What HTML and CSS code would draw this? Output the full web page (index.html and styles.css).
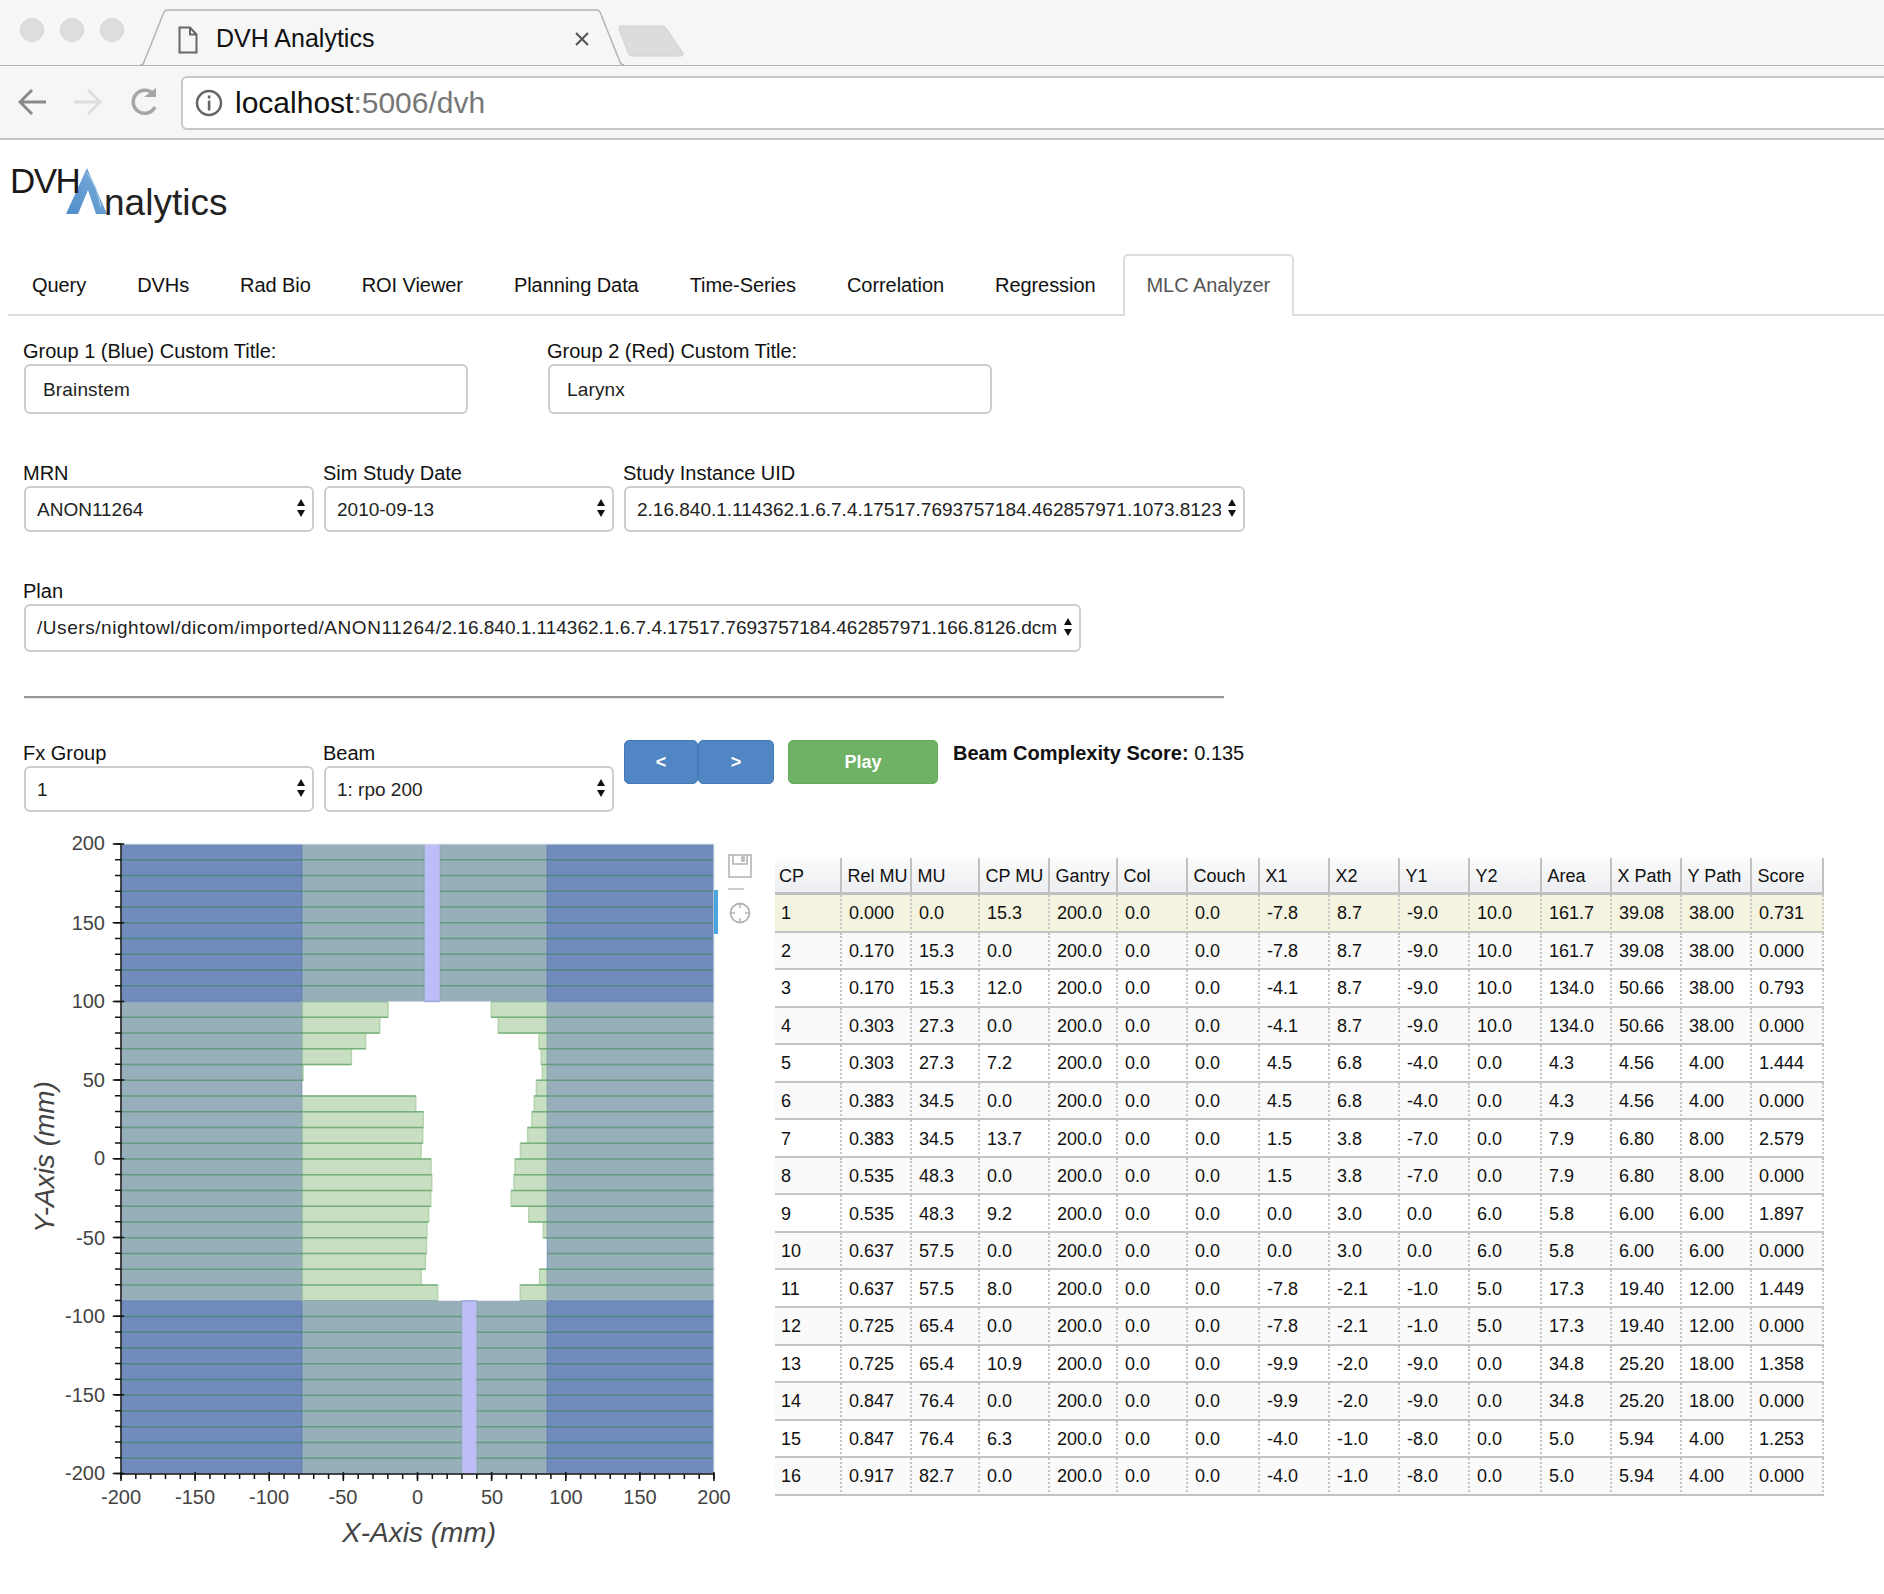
FILE: index.html
```html
<!DOCTYPE html>
<html lang="en">
<head>
<meta charset="utf-8">
<title>DVH Analytics</title>
<link rel="stylesheet" href="styles.css">
</head>
<body>
<header class="browser">
  <div class="tabstrip">
    <div class="lights"><span class="light"></span><span class="light"></span><span class="light"></span></div>
    <div class="tab">
      <svg class="tab-shape" width="484" height="57" viewBox="0 0 484 57"><path d="M0 56H1Q3 56 4 53L24 3Q25 1 28 1H456Q459 1 460 3L480 53Q481 56 484 56" fill="#f6f6f6" stroke="#b4b4b4" stroke-width="1.5"/></svg>
      <svg class="tab-file" width="20" height="28" viewBox="0 0 20 28"><path d="M1.5 1.5H12L18.500 8.500V26.500H1.500Z M12 1.500V8.500H18.500" fill="none" stroke="#666" stroke-width="2"/></svg>
      <span class="tab-title">DVH Analytics</span>
      <svg class="tab-close" width="14" height="14" viewBox="0 0 14 14"><path d="M1 1L13 13M13 1L1 13" stroke="#555" stroke-width="2"/></svg>
    </div>
    <svg class="newtab" width="66" height="32" viewBox="0 0 66 32"><path d="M3 1H45Q47 1 48 3L65 28Q66 31 63 31H14Q11 31 10 28L1 4Q0 1 3 1Z" fill="#dcdcdc" stroke="#d2d2d2"/></svg>
  </div>
  <div class="toolbar">
    <svg class="nav-icons" width="150" height="30" viewBox="0 0 150 30">
      <path d="M2 14H28M14 2L2 14L14 26" fill="none" stroke="#8a8a8a" stroke-width="3"/>
      <path d="M56 14H82M70 2L82 14L70 26" fill="none" stroke="#dedede" stroke-width="3"/>
      <path d="M136 7A11.500 11.500 0 1 0 137 19" fill="none" stroke="#a6a6a6" stroke-width="3.500"/>
      <path d="M126 9H138V0Z" fill="#a6a6a6"/>
    </svg>
    <div class="address">
      <svg width="28" height="28" viewBox="0 0 28 28"><circle cx="14" cy="14" r="12" fill="none" stroke="#666" stroke-width="2.500"/><rect x="12.800" y="6.500" width="2.600" height="3" fill="#666"/><rect x="12.800" y="11.500" width="2.600" height="10" fill="#666"/></svg>
      <span class="url">localhost<span class="url-dim">:5006/dvh</span></span>
    </div>
  </div>
</header>

<main class="app">
  <div class="logo">
    <svg class="logo-a" width="44" height="48" viewBox="0 0 44 48">
      <defs><linearGradient id="logoGrad" x1="0" y1="1" x2="1" y2="0"><stop offset="0" stop-color="#4f8cc9"/><stop offset="1" stop-color="#7eb0dd"/></linearGradient></defs>
      <path d="M1 47L22 1L42 47H31L23 23L13 47Z" fill="url(#logoGrad)"/>
      <path d="M22 6Q32 18 36 40" fill="none" stroke="#b6d3ec" stroke-width="1"/>
    </svg>
    <span class="logo-dvh">DVH</span>
    <span class="logo-rest">nalytics</span>
  </div>

  <nav class="tabs">
    <a class="tab-link">Query</a>
    <a class="tab-link">DVHs</a>
    <a class="tab-link">Rad Bio</a>
    <a class="tab-link">ROI Viewer</a>
    <a class="tab-link">Planning Data</a>
    <a class="tab-link">Time-Series</a>
    <a class="tab-link">Correlation</a>
    <a class="tab-link">Regression</a>
    <a class="tab-link active">MLC Analyzer</a>
  </nav>

  <section class="form">
    <div class="row row-titles">
      <div class="field w-title"><label class="label">Group 1 (Blue) Custom Title:</label><input class="input" value="Brainstem"></div>
      <div class="field w-title"><label class="label">Group 2 (Red) Custom Title:</label><input class="input" value="Larynx"></div>
    </div>
    <div class="row row-selects">
      <div class="field w-sel"><label class="label">MRN</label><div class="select"><select><option>ANON11264</option></select></div></div>
      <div class="field w-sel"><label class="label">Sim Study Date</label><div class="select"><select><option>2010-09-13</option></select></div></div>
      <div class="field w-uid"><label class="label">Study Instance UID</label><div class="select"><select><option>2.16.840.1.114362.1.6.7.4.17517.7693757184.462857971.1073.8123</option></select></div></div>
    </div>
    <div class="row row-selects">
      <div class="field w-plan"><label class="label">Plan</label><div class="select tall"><div class="select-box" role="combobox"><span class="path-head">/Users/nightowl/dicom/imported/ANON11264/</span>2.16.840.1.114362.1.6.7.4.17517.7693757184.462857971.166.8126.dcm</div></div></div>
    </div>
    <hr class="rule">
    <div class="row row-beam">
      <div class="field w-sel"><label class="label">Fx Group</label><div class="select"><select><option>1</option></select></div></div>
      <div class="field w-sel"><label class="label">Beam</label><div class="select"><select><option>1: rpo 200</option></select></div></div>
      <div class="btns">
        <button class="btn btn-blue btn-prev">&lt;</button>
        <button class="btn btn-blue btn-next">&gt;</button>
        <button class="btn btn-green">Play</button>
      </div>
      <p class="score"><b>Beam Complexity Score:</b> 0.135</p>
    </div>
  </section>

  <section class="results">
    <svg class="chart" width="702" height="730" viewBox="20 830 702 730">
      <svg x="121" y="844" width="593" height="630" viewBox="-200 -200 400 400" preserveAspectRatio="none">
        <rect class="jaw1" x="-200" y="-200" width="400" height="100"/>
        <rect class="jaw1" x="-200" y="90" width="400" height="110"/>
        <rect class="jaw1" x="-200" y="-100" width="122" height="190"/>
        <rect class="jaw1" x="87.500" y="-100" width="112.500" height="190"/>
        <rect class="jaw2" x="-200" y="-200" width="122" height="100"/>
        <rect class="jaw2" x="87.500" y="-200" width="112.500" height="100"/>
        <rect class="jaw2" x="-200" y="90" width="122" height="110"/>
        <rect class="jaw2" x="87.500" y="90" width="112.500" height="110"/>
        <rect class="gap" x="4.600" y="-200" width="10.600" height="100"/>
        <rect class="gap" x="29.800" y="90" width="10.200" height="110"/>
        <path class="leaf" d="M-78-100H-19.900V-90H-78ZM-78-90H-25.500V-80H-78ZM-78-80H-35V-70H-78ZM-78-70H-44.600V-60H-78ZM-78-60H-77.200V-50H-78ZM-78-40H-1.200V-30H-78ZM-78-30H3.900V-20H-78ZM-78-20H3.500V-10H-78ZM-78-10H2.400V0H-78ZM-78 0H9.100V10H-78ZM-78 10H9.600V20H-78ZM-78 20H8.900V30H-78ZM-78 30H7.500V40H-78ZM-78 40H6.300V50H-78ZM-78 50H6V60H-78ZM-78 60H5.300V70H-78ZM-78 70H2.400V80H-78ZM-78 80H13.600V90H-78Z"/>
        <path class="leaf" d="M87.500-100H49.800V-90H87.500ZM87.500-90H54.500V-80H87.500ZM87.500-80H82V-70H87.500ZM87.500-70H83.500V-60H87.500ZM87.500-60H84.200V-50H87.500ZM87.500-50H80.200V-40H87.500ZM87.500-40H78.800V-30H87.500ZM87.500-30H77.200V-20H87.500ZM87.500-20H74.300V-10H87.500ZM87.500-10H69.400V0H87.500ZM87.500 0H65.800V10H87.500ZM87.500 10H65.100V20H87.500ZM87.500 20H63.200V30H87.500ZM87.500 30H75V40H87.500ZM87.500 40H84.900V50H87.500ZM87.500 70H82.400V80H87.500ZM87.500 80H69.300V90H87.500Z"/>
        <path class="edge" d="M-78-200V200M87.500-200V200M-200-100H-19.900M49.800-100H200M-200 90H13.600M69.300 90H200M4.600-100H15.200M29.800 90H40"/>
        <path class="gap-edge" d="M4.600-200V-100M15.200-200V-100M29.800 90V200M40 90V200"/>
        <path class="seam" d="M-200-190H4.600M15.200-190H200M-200-180H4.600M15.200-180H200M-200-170H4.600M15.200-170H200M-200-160H4.600M15.200-160H200M-200-150H4.600M15.200-150H200M-200-140H4.600M15.200-140H200M-200-130H4.600M15.200-130H200M-200-120H4.600M15.200-120H200M-200-110H4.600M15.200-110H200M-200-90H-19.900M49.800-90H200M-200-80H-25.500M54.500-80H200M-200-70H-35M82-70H200M-200-60H-44.600M83.500-60H200M-200-50H-77.200M80.200-50H200M-200-40H-1.200M78.800-40H200M-200-30H3.900M77.200-30H200M-200-20H3.900M74.300-20H200M-200-10H3.500M69.400-10H200M-200 0H9.100M65.800 0H200M-200 10H9.600M65.100 10H200M-200 20H9.600M63.200 20H200M-200 30H8.900M63.200 30H200M-200 40H7.500M75 40H200M-200 50H6.300M84.900 50H200M-200 60H6M87.500 60H200M-200 70H5.300M82.400 70H200M-200 80H13.600M69.300 80H200M-200 100H29.800M40 100H200M-200 110H29.800M40 110H200M-200 120H29.800M40 120H200M-200 130H29.800M40 130H200M-200 140H29.800M40 140H200M-200 150H29.800M40 150H200M-200 160H29.800M40 160H200M-200 170H29.800M40 170H200M-200 180H29.800M40 180H200M-200 190H29.800M40 190H200"/>
      </svg>
      <rect class="plot-frame" x="121" y="844" width="593" height="630"/>
      <rect class="active-bar" x="714" y="890" width="4" height="44"/>
      <line class="axis" x1="121" y1="844" x2="121" y2="1474"/>
      <line class="axis" x1="120" y1="1474" x2="714" y2="1474"/>
      <line class="tick" x1="118" y1="843.250" x2="118" y2="1475" stroke-width="6" stroke-dasharray="1.500 14.240"/>
      <line class="tick" x1="118.500" y1="843.250" x2="118.500" y2="1475" stroke-width="11.500" stroke-dasharray="1.500 77.190"/>
      <line class="tick" x1="120.250" y1="1476.500" x2="715" y2="1476.500" stroke-width="5" stroke-dasharray="1.500 13.325"/>
      <line class="tick" x1="120.250" y1="1476.500" x2="715" y2="1476.500" stroke-width="9" stroke-dasharray="1.500 72.625"/>
      <g class="tick-y">
        <text x="105" y="850">200</text><text x="105" y="930">150</text><text x="105" y="1008">100</text><text x="105" y="1087">50</text><text x="105" y="1165">0</text><text x="105" y="1245">-50</text><text x="105" y="1323">-100</text><text x="105" y="1402">-150</text><text x="105" y="1480">-200</text>
      </g>
      <g class="tick-x">
        <text x="121" y="1504">-200</text><text x="195" y="1504">-150</text><text x="269" y="1504">-100</text><text x="343" y="1504">-50</text><text x="417.500" y="1504">0</text><text x="492" y="1504">50</text><text x="566" y="1504">100</text><text x="640" y="1504">150</text><text x="714" y="1504">200</text>
      </g>
      <text class="axis-title" x="419" y="1542">X-Axis (mm)</text>
      <text class="axis-title" transform="translate(54 1157) rotate(-90)">Y-Axis (mm)</text>
    </svg>

    <div class="plot-tools">
      <svg width="24" height="24" viewBox="0 0 24 24"><path d="M1 1H23V23H1ZM5 1V10H19V1M14 3V7H16V3Z" fill="none" stroke="#b0b0b0" stroke-width="1.500"/></svg>
      <span class="tool-div"></span>
      <svg width="22" height="22" viewBox="0 0 22 22"><circle cx="11" cy="11" r="9.500" fill="none" stroke="#b0b4b8" stroke-width="1.800"/><path d="M11 1V6M11 16V21M1 11H6M16 11H21" stroke="#b0b4b8" stroke-width="1.500"/></svg>
    </div>

    <table class="grid">
      <colgroup>
        <col class="w67"><col class="w70"><col class="w68"><col class="w70"><col class="w68"><col class="w70"><col class="w72"><col class="w70"><col class="w70"><col class="w70"><col class="w72"><col class="w70"><col class="w70"><col class="w70"><col class="w72">
      </colgroup>
      <thead>
        <tr><th>CP</th><th>Rel MU</th><th>MU</th><th>CP MU</th><th>Gantry</th><th>Col</th><th>Couch</th><th>X1</th><th>X2</th><th>Y1</th><th>Y2</th><th>Area</th><th>X Path</th><th>Y Path</th><th>Score</th></tr>
      </thead>
      <tbody>
        <tr class="selected"><td>1</td><td>0.000</td><td>0.0</td><td>15.3</td><td>200.0</td><td>0.0</td><td>0.0</td><td>-7.8</td><td>8.7</td><td>-9.0</td><td>10.0</td><td>161.7</td><td>39.08</td><td>38.00</td><td>0.731</td></tr>
        <tr><td>2</td><td>0.170</td><td>15.3</td><td>0.0</td><td>200.0</td><td>0.0</td><td>0.0</td><td>-7.8</td><td>8.7</td><td>-9.0</td><td>10.0</td><td>161.7</td><td>39.08</td><td>38.00</td><td>0.000</td></tr>
        <tr><td>3</td><td>0.170</td><td>15.3</td><td>12.0</td><td>200.0</td><td>0.0</td><td>0.0</td><td>-4.1</td><td>8.7</td><td>-9.0</td><td>10.0</td><td>134.0</td><td>50.66</td><td>38.00</td><td>0.793</td></tr>
        <tr><td>4</td><td>0.303</td><td>27.3</td><td>0.0</td><td>200.0</td><td>0.0</td><td>0.0</td><td>-4.1</td><td>8.7</td><td>-9.0</td><td>10.0</td><td>134.0</td><td>50.66</td><td>38.00</td><td>0.000</td></tr>
        <tr><td>5</td><td>0.303</td><td>27.3</td><td>7.2</td><td>200.0</td><td>0.0</td><td>0.0</td><td>4.5</td><td>6.8</td><td>-4.0</td><td>0.0</td><td>4.3</td><td>4.56</td><td>4.00</td><td>1.444</td></tr>
        <tr><td>6</td><td>0.383</td><td>34.5</td><td>0.0</td><td>200.0</td><td>0.0</td><td>0.0</td><td>4.5</td><td>6.8</td><td>-4.0</td><td>0.0</td><td>4.3</td><td>4.56</td><td>4.00</td><td>0.000</td></tr>
        <tr><td>7</td><td>0.383</td><td>34.5</td><td>13.7</td><td>200.0</td><td>0.0</td><td>0.0</td><td>1.5</td><td>3.8</td><td>-7.0</td><td>0.0</td><td>7.9</td><td>6.80</td><td>8.00</td><td>2.579</td></tr>
        <tr><td>8</td><td>0.535</td><td>48.3</td><td>0.0</td><td>200.0</td><td>0.0</td><td>0.0</td><td>1.5</td><td>3.8</td><td>-7.0</td><td>0.0</td><td>7.9</td><td>6.80</td><td>8.00</td><td>0.000</td></tr>
        <tr><td>9</td><td>0.535</td><td>48.3</td><td>9.2</td><td>200.0</td><td>0.0</td><td>0.0</td><td>0.0</td><td>3.0</td><td>0.0</td><td>6.0</td><td>5.8</td><td>6.00</td><td>6.00</td><td>1.897</td></tr>
        <tr><td>10</td><td>0.637</td><td>57.5</td><td>0.0</td><td>200.0</td><td>0.0</td><td>0.0</td><td>0.0</td><td>3.0</td><td>0.0</td><td>6.0</td><td>5.8</td><td>6.00</td><td>6.00</td><td>0.000</td></tr>
        <tr><td>11</td><td>0.637</td><td>57.5</td><td>8.0</td><td>200.0</td><td>0.0</td><td>0.0</td><td>-7.8</td><td>-2.1</td><td>-1.0</td><td>5.0</td><td>17.3</td><td>19.40</td><td>12.00</td><td>1.449</td></tr>
        <tr><td>12</td><td>0.725</td><td>65.4</td><td>0.0</td><td>200.0</td><td>0.0</td><td>0.0</td><td>-7.8</td><td>-2.1</td><td>-1.0</td><td>5.0</td><td>17.3</td><td>19.40</td><td>12.00</td><td>0.000</td></tr>
        <tr><td>13</td><td>0.725</td><td>65.4</td><td>10.9</td><td>200.0</td><td>0.0</td><td>0.0</td><td>-9.9</td><td>-2.0</td><td>-9.0</td><td>0.0</td><td>34.8</td><td>25.20</td><td>18.00</td><td>1.358</td></tr>
        <tr><td>14</td><td>0.847</td><td>76.4</td><td>0.0</td><td>200.0</td><td>0.0</td><td>0.0</td><td>-9.9</td><td>-2.0</td><td>-9.0</td><td>0.0</td><td>34.8</td><td>25.20</td><td>18.00</td><td>0.000</td></tr>
        <tr><td>15</td><td>0.847</td><td>76.4</td><td>6.3</td><td>200.0</td><td>0.0</td><td>0.0</td><td>-4.0</td><td>-1.0</td><td>-8.0</td><td>0.0</td><td>5.0</td><td>5.94</td><td>4.00</td><td>1.253</td></tr>
        <tr><td>16</td><td>0.917</td><td>82.7</td><td>0.0</td><td>200.0</td><td>0.0</td><td>0.0</td><td>-4.0</td><td>-1.0</td><td>-8.0</td><td>0.0</td><td>5.0</td><td>5.94</td><td>4.00</td><td>0.000</td></tr>
      </tbody>
    </table>
  </section>
</main>
</body>
</html>
```
FILE: styles.css
```css
* { box-sizing: border-box; }
html, body { margin: 0; padding: 0; }
body {
  background: #fff;
  color: #111;
  font-family: "Liberation Sans", Arial, sans-serif;
  overflow: hidden;
  height: 1594px;
}

/* browser chrome */
.browser { background: #f6f6f6; border-bottom: 2px solid #c2c2c2; height: 140px; overflow: hidden; }
.tabstrip {
  position: relative;
  display: flex;
  align-items: flex-start;
  height: 66px;
  border-bottom: 1.5px solid #b4b4b4;
}
.lights { display: flex; gap: 16px; padding: 18px 0 0 20px; width: 140px; }
.light { width: 24px; height: 24px; border-radius: 50%; background: #dddddd; border: 1px solid #d2d2d2; }
.tab { position: relative; display: flex; align-items: center; width: 484px; height: 57px; margin-top: 9px; padding: 0 35px 0 38px; }
.tab-shape { position: absolute; left: 0; top: 0; }
.tab-file { position: relative; flex: none; margin-top: 5px; }
.tab-title { position: relative; flex: 1; margin: 1px 0 0 18px; font-size: 25px; color: #111; }
.tab-close { position: relative; flex: none; margin-top: 2px; }
.newtab { margin: 25px 0 0 -6px; }
.toolbar { display: flex; align-items: center; height: 72px; padding-top: 2px; }
.nav-icons { flex: none; margin: 0 13px 0 18px; }
.address {
  flex: 1;
  display: flex;
  align-items: center;
  gap: 12px;
  height: 54px;
  margin-right: -12px;
  padding-left: 12px;
  background: #fff;
  border: 2px solid #c8c8c8;
  border-radius: 6px;
}
.url { font-size: 30px; color: #111; }
.url-dim { color: #777; }

/* logo */
.logo { position: relative; height: 114px; }
.logo-a { position: absolute; left: 65px; top: 27px; }
.logo-dvh { position: absolute; left: 10px; top: 21px; font-size: 35px; line-height: 40px; letter-spacing: -1.500px; color: #1a1a1a; }
.logo-rest { position: absolute; left: 104px; top: 42px; font-size: 37px; line-height: 42px; color: #222; }

/* tabs */
.tabs { display: flex; margin-left: 8px; height: 62px; border-bottom: 2px solid #ddd; padding-left: 0; }
.tab-link {
  height: 62px;
  padding: 15px 22px 0;
  margin-right: 3px;
  border: 2px solid transparent;
  border-bottom: 0;
  border-radius: 5px 5px 0 0;
  font-size: 20px;
  line-height: 28px;
  letter-spacing: -.07px;
  color: #111;
}
.tab-link.active { color: #555; background: #fff; border-color: #ddd; }

/* form */
.form { padding: 22px 0 0 24px; }
.row { display: flex; }
.row-titles { gap: 80px; }
.row-selects { gap: 10px; margin-top: 46px; }
.row-beam { gap: 10px; margin-top: 41px; }
.field { display: flex; flex-direction: column; }
.w-title { width: 444px; }
.w-sel { width: 290px; }
.w-uid { width: 621px; }
.w-plan { width: 1057px; }
.label { display: block; height: 26px; margin-left: -1px; font-size: 20px; line-height: 26px; color: #111; }
.input {
  height: 50px;
  padding: 2px 17px 0;
  border: 2px solid #cdcdcd;
  border-radius: 6px;
  outline: 0;
  font: 19px "Liberation Sans", Arial, sans-serif;
  letter-spacing: .15px;
  color: #222;
  background: #fff;
}
.select { position: relative; height: 46px; }
.select.tall { height: 48px; }
.select select, .select-box {
  appearance: none;
  -webkit-appearance: none;
  display: block;
  width: 100%;
  height: 100%;
  padding: 0 22px 0 11px;
  border: 2px solid #cdcdcd;
  border-radius: 6px;
  outline: 0;
  background: #fff;
  font: 19px "Liberation Sans", Arial, sans-serif;
  color: #222;
}
.select-box { line-height: 44px; white-space: nowrap; overflow: hidden; }
.path-head { letter-spacing: .55px; }
.select::before, .select::after {
  content: "";
  position: absolute;
  right: 9px;
  width: 0;
  height: 0;
  border-left: 4.500px solid transparent;
  border-right: 4.500px solid transparent;
  pointer-events: none;
}
.select::before { top: calc(50% - 10px); border-bottom: 7px solid #111; }
.select::after { top: calc(50% + 1px); border-top: 7px solid #111; }
.rule { height: 3px; width: 1200px; margin: 44px 0 0; border: 0; border-top: 2px solid #999; border-bottom: 1px solid #e4e4e4; background: transparent; }
.btns { display: flex; }
.btn {
  height: 44px;
  border: 1px solid;
  border-radius: 5px;
  padding: 0;
  color: #fff;
  font: bold 18px "Liberation Sans", Arial, sans-serif;
}
.btn-blue { background: #4f86c3; border-color: #4479b4; }
.btn-prev { width: 74px; }
.btn-next { width: 76px; }
.btn-green { width: 150px; margin-left: 14px; background: #6fb265; border-color: #66a95c; }
.score { margin: 0 0 0 5px; font-size: 20px; line-height: 26px; color: #111; }

/* results */
.results { display: flex; align-items: flex-start; margin: 18px 0 0 20px; }
.chart { display: block; flex: none; overflow: visible; }
.jaw1 { fill: #97aebb; }
.jaw2 { fill: #708bbc; }
.gap { fill: #bdbdf7; }
.leaf { fill: #c8dfc1; stroke: #b4d4ad; stroke-width: 1.500px; vector-effect: non-scaling-stroke; }
.edge { fill: none; stroke: rgba(70, 100, 170, .35); stroke-width: 1.500px; vector-effect: non-scaling-stroke; }
.gap-edge { fill: none; stroke: rgba(90, 160, 110, .25); stroke-width: 1.500px; vector-effect: non-scaling-stroke; }
.seam { fill: none; stroke: rgba(40, 130, 60, .45); stroke-width: 1.500px; vector-effect: non-scaling-stroke; }
.plot-frame { fill: none; stroke: #e4e9ee; stroke-width: 1px; }
.active-bar { fill: #4aa6dc; }
.axis { stroke: #111; stroke-width: 1.500px; }
.tick { stroke: #111; fill: none; }
.tick-y text, .tick-x text { font-size: 20px; fill: #444; font-family: "Liberation Sans", Arial, sans-serif; }
.tick-y text { text-anchor: end; }
.tick-x text { text-anchor: middle; }
.axis-title { font: italic 28px "Liberation Sans", Arial, sans-serif; fill: #444; text-anchor: middle; }
.plot-tools { flex: none; display: flex; flex-direction: column; align-items: flex-start; width: 53px; padding: 24px 0 0 6px; }
.tool-div { width: 16px; height: 2px; margin: 10px 0 12px; background: #ccc; }
.plot-tools svg:last-child { margin-left: 1px; }

/* table */
.grid { flex: none; width: 1049px; margin-top: 28px; table-layout: fixed; border-collapse: separate; border-spacing: 0; font-size: 18px; color: #111; }
.w67 { width: 67px; } .w68 { width: 68px; } .w70 { width: 70px; } .w72 { width: 72px; }
.grid th {
  height: 37px;
  padding: 2px 0 0 5.500px;
  text-align: left;
  font-weight: normal;
  white-space: nowrap;
  background: linear-gradient(#fbfbfb, #eceef1);
  border-right: 2px solid #c0c0c0;
  border-bottom: 3px solid #c0c0c0;
}
.grid th:first-child { padding-left: 4px; }
.grid td {
  height: 37.560px;
  padding: 2px 0 0 7px;
  white-space: nowrap;
  background: #fff;
  border-right: 2px dotted #c4c4c4;
  border-bottom: 2px solid #c4c4c4;
}
.grid td:first-child { padding-left: 6px; }
.grid tbody tr:nth-child(even) td { background: #fafafa; }
.grid tbody tr.selected td { background: #f3f3df; }
```
